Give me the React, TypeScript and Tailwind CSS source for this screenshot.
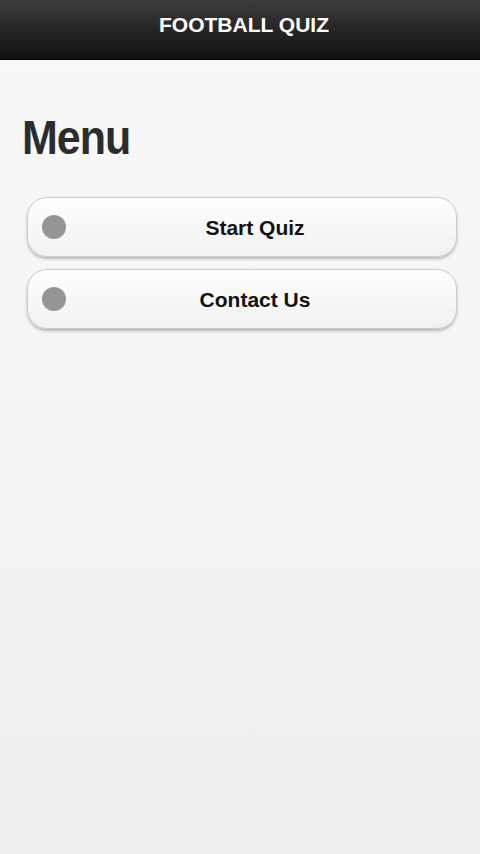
export default function App() {
  const items = ["Start Quiz", "Contact Us"];
  return (
    <div
      className="min-h-[854px] w-[480px] flex flex-col bg-gradient-to-b from-[#f9f9f9] to-[#eeeeee]"
      style={{ fontFamily: '"Liberation Sans", Arial, sans-serif' }}
    >
      {/* Header */}
      <div className="h-[60px] shrink-0 flex items-center justify-center bg-gradient-to-b from-[#3c3c3c] to-[#111111] border-b border-[#000]">
        <h1 className="text-white font-bold text-[21px] leading-none pb-[10px] pl-[8px]">
          FOOTBALL QUIZ
        </h1>
      </div>

      <div className="px-[22px] pt-[54px]">
        <h2 className="text-[#2c2c2c] font-bold text-[43px] leading-none tracking-[-1px] scale-y-[1.1] origin-top">
          Menu
        </h2>
      </div>

      <div className="flex flex-col gap-[12px] pl-[27px] pr-[23px] pt-[40px]">
        {items.map((label) => (
          <button
            key={label}
            className="relative h-[60px] w-full rounded-[20px] border border-[#cccccc] bg-gradient-to-b from-[#ffffff] to-[#f1f1f1] shadow-[0_2px_3px_rgba(0,0,0,0.25)] flex items-center justify-center"
          >
            <span className="absolute left-[14px] top-1/2 -translate-y-1/2 w-[24px] h-[24px] rounded-full bg-[#959595]" />
            <span className="text-[#111] font-bold text-[21px] leading-none pl-[26px]">
              {label}
            </span>
          </button>
        ))}
      </div>
    </div>
  );
}
